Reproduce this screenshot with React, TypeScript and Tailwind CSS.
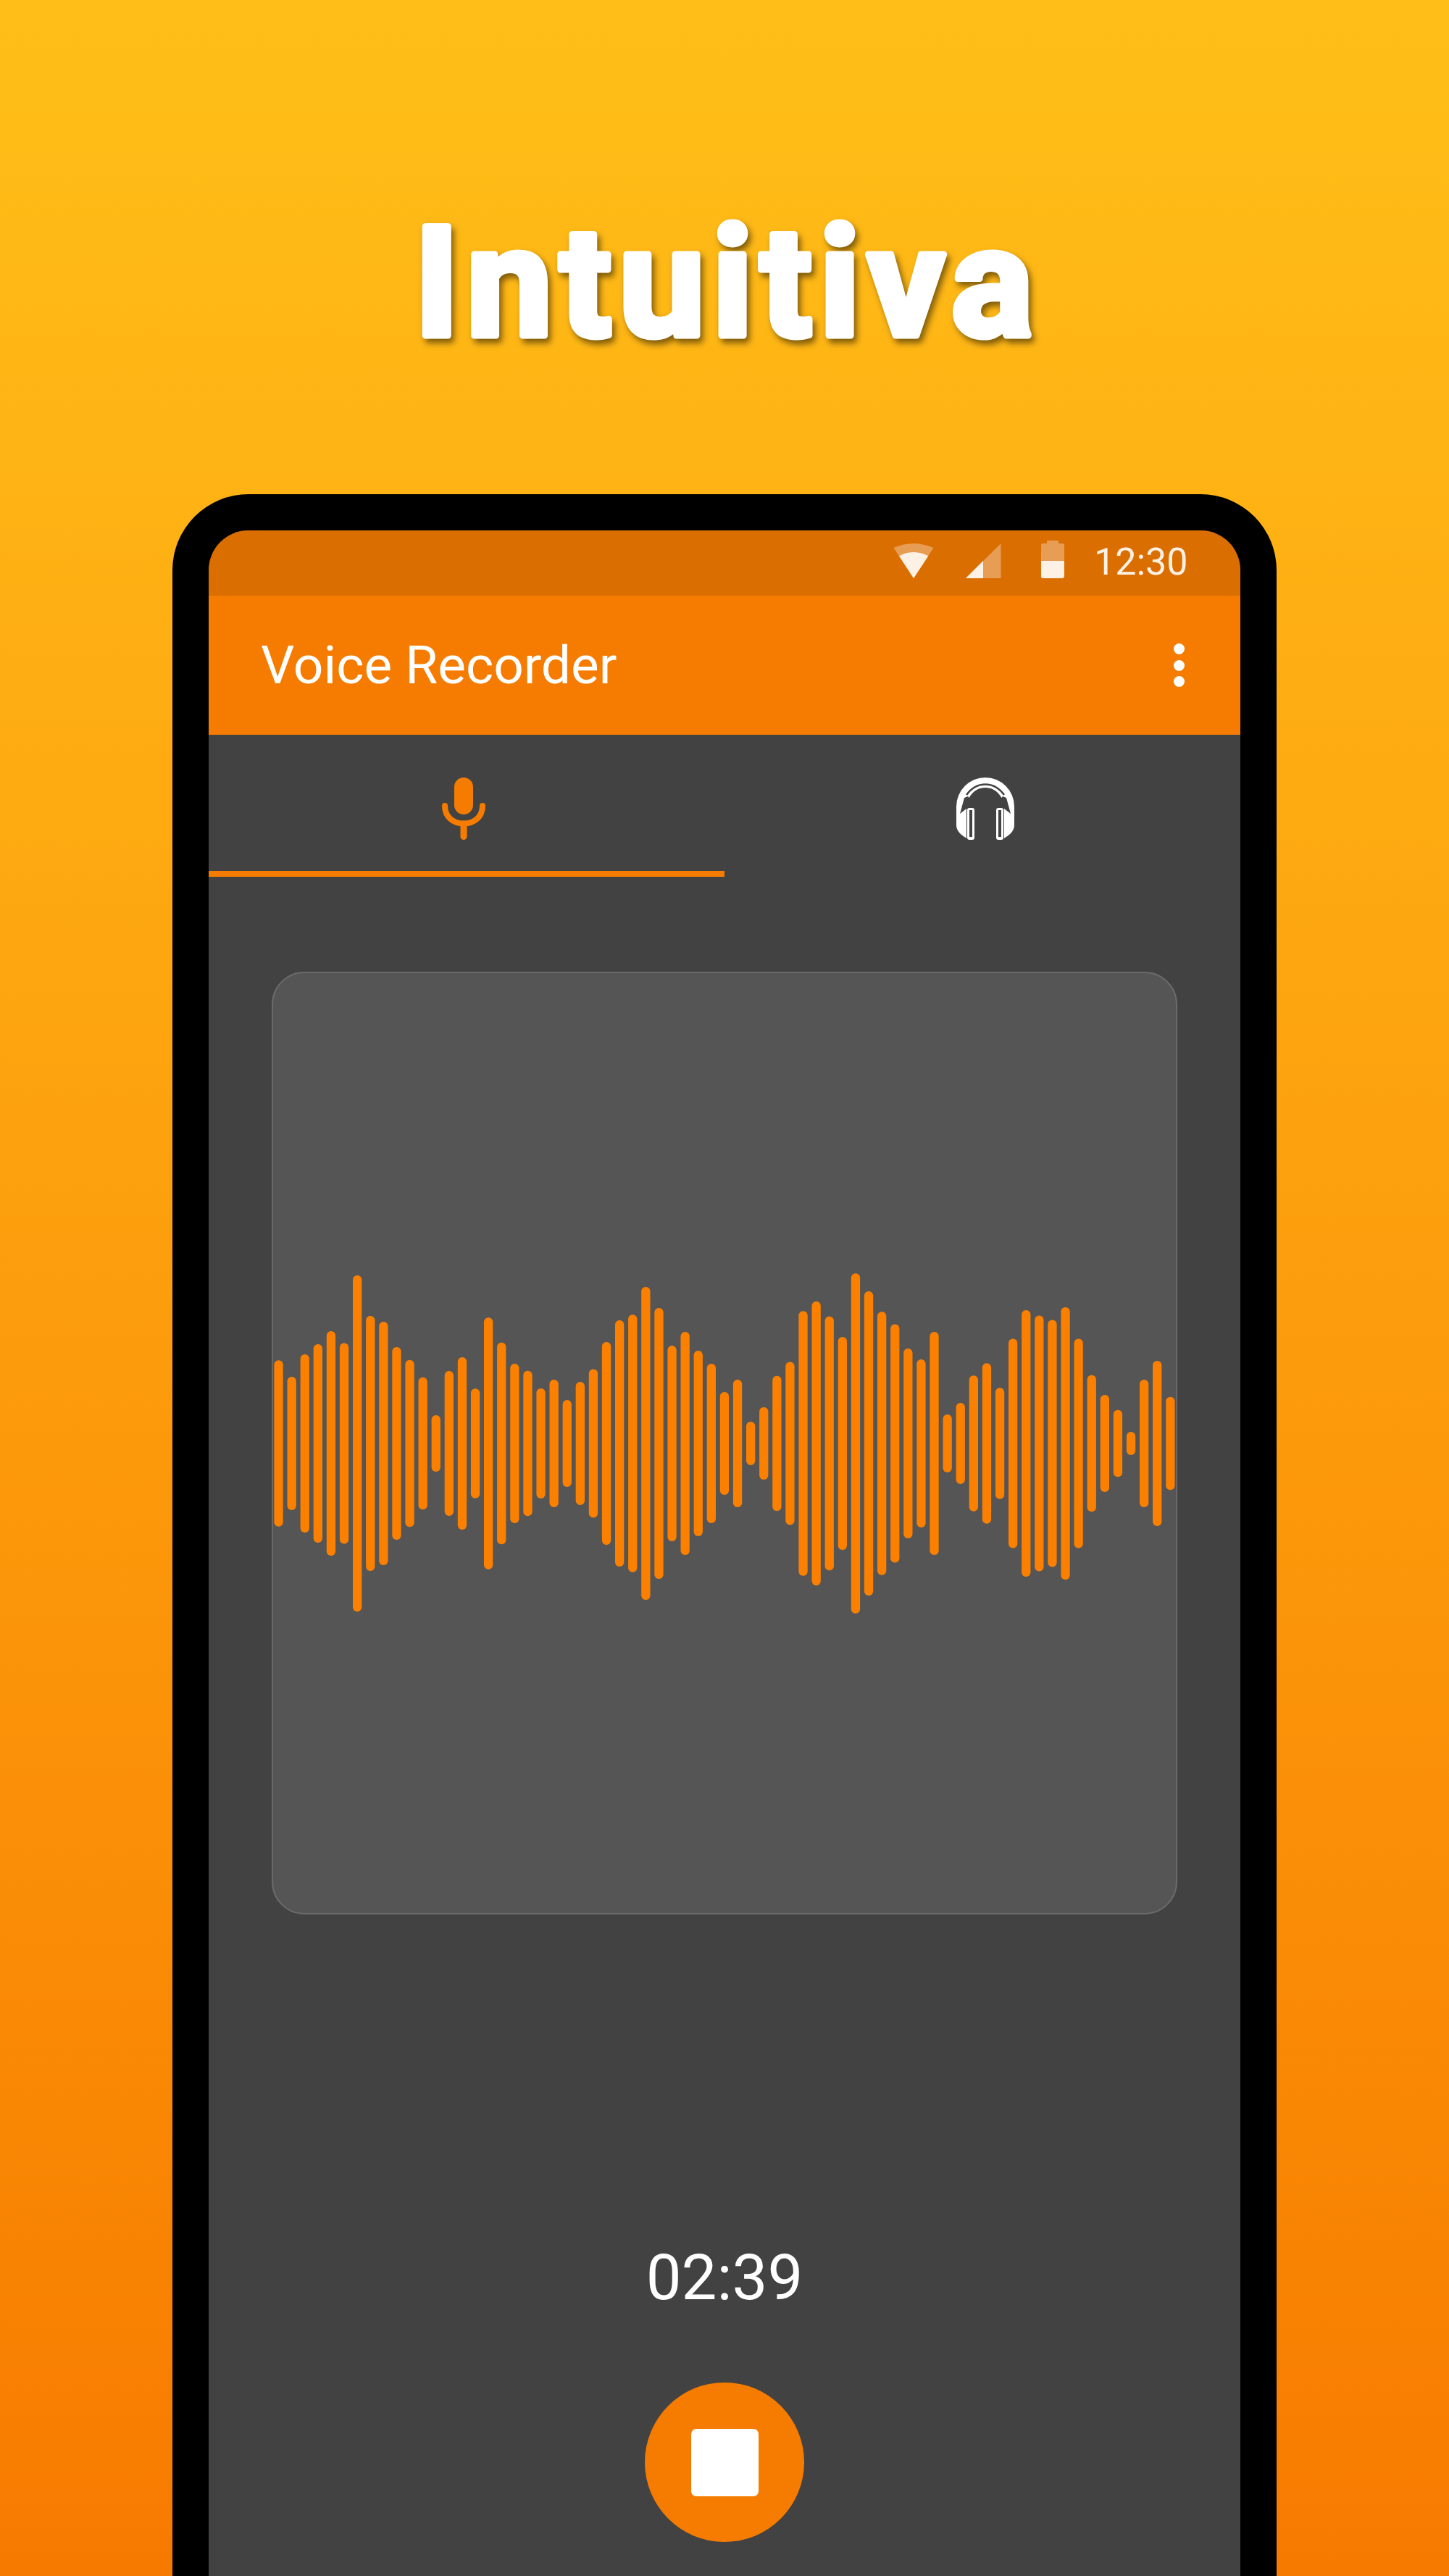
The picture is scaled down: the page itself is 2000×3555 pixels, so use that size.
const bars = [
  688, 552, 738, 822, 930, 831, 1392, 1056, 1008, 798, 692, 547, 234, 600, 714, 454, 1042, 835, 660, 601, 456, 528, 360, 510, 615,
  840, 1020, 1066, 1296, 1122, 810, 924, 768, 660, 426, 528, 180, 300, 559, 675, 1096, 1176, 1052, 882, 1409, 1260, 1090, 987, 786,
  696, 924, 240, 336, 563, 664, 460, 867, 1104, 1059, 1023, 1128, 867, 566, 402, 277, 96, 528, 684, 386,
];

function Wifi() {
  return (
    <svg width="56" height="48" viewBox="0 0 56 48" className="block">
      <path d="M0.4 6Q28 -6 55.5 6L28 48Z" fill="#fff" fillOpacity="0.33" />
      <path d="M8 17.3Q28 6.7 48.3 17.3L28 48Z" fill="#fdf1e5" />
    </svg>
  );
}

function Signal() {
  return (
    <svg width="49" height="48" viewBox="0 0 49 48" className="block">
      <path d="M0 48L48.5 0V48Z" fill="#fff" fillOpacity="0.33" />
      <path d="M0 48L24 24V48Z" fill="#fdf1e5" />
    </svg>
  );
}

function Battery() {
  return (
    <svg width="32" height="52" viewBox="0 0 32 52" className="block">
      <path d="M8 0H24V4H30Q32 4 32 6V28H0V6Q0 4 2 4H8Z" fill="#fff" fillOpacity="0.33" />
      <path d="M0 28H32V49Q32 52 29 52H3Q0 52 0 49Z" fill="#fdf1e5" />
    </svg>
  );
}

function Mic() {
  return (
    <svg width="60" height="86" viewBox="0 0 60 86" className="block" fill="none">
      <rect x="17" y="0" width="26" height="51" rx="13" fill="#f57c00" />
      <path d="M4 39C4 54 15 63.500 30 63.500C45 63.500 56 54 56 39" stroke="#f57c00" strokeWidth="8" strokeLinecap="round" />
      <path d="M30 64V81.500" stroke="#f57c00" strokeWidth="9" strokeLinecap="round" />
    </svg>
  );
}

function Headphones() {
  return (
    <svg width="80" height="86" viewBox="0 0 80 86" className="block">
      <path d="M0 66V40A40 40 0 0 1 80 40V66C80 74 72 81 65 84H15C8 81 0 74 0 66Z" fill="#fff" />
      <path
        d="M5 50L11 28L16 26L17.500 28C24 17 32 14 40 14C48 14 56 17 62.500 28L64 26L69 28L75 50L66 43V86H14V43Z"
        fill="#424242"
      />
      <path d="M14 24C22 13 31 9.500 40 9.500C49 9.500 58 13 66 24" fill="none" stroke="#424242" strokeWidth="2.500" />
      <rect x="15" y="42" width="10" height="44" rx="3" fill="#fff" />
      <rect x="55" y="42" width="10" height="44" rx="3" fill="#fff" />
      <rect x="18" y="45" width="4" height="37" fill="#424242" />
      <rect x="58" y="45" width="4" height="37" fill="#424242" />
    </svg>
  );
}

function Waveform() {
  return (
    <svg width="1246" height="480" viewBox="0 0 1246 480" className="block">
      {bars.map((h, i) => {
        const height = h / 3;
        return (
          <rect key={i} x={1.4 + i * 18.1} y={240 - height / 2} width="12.3" height={height} rx="6" fill="#fb8000" />
        );
      })}
    </svg>
  );
}

export default function App() {
  return (
    <div className="w-[2000px] h-[3555px] overflow-hidden flex flex-col items-center bg-linear-to-b from-[#ffbf18] to-[#f77a00] font-['Roboto',sans-serif]">
      <div className="h-[682px] w-full flex justify-center pt-[220px]">
        <svg width="1200" height="340" viewBox="0 0 1200 340" className="block drop-shadow-[4px_6px_4px_rgba(0,0,0,0.5)]">
          <text
            x="604"
            y="243"
            textAnchor="middle"
            fill="#fff"
            stroke="#fff"
            strokeWidth="9"
            strokeLinejoin="round"
            className="font-['Roboto',sans-serif] font-bold text-[212px] tracking-[10px]"
          >
            Intuitiva
          </text>
        </svg>
      </div>

      <div className="w-[1524px] flex-1 border-x-[50px] border-t-[50px] border-black rounded-t-[105px] bg-[#424242] overflow-hidden">
        <div className="h-[90px] bg-[#db6e00] flex items-end justify-end pb-[24px] pr-[76px]">
          <Wifi />
          <div className="ml-[44px]">
            <Signal />
          </div>
          <div className="ml-[55px]">
            <Battery />
          </div>
          <span className="ml-[41px] w-[126px] text-[52px] leading-[52px] font-normal text-[#fdf1e5] h-[48px]">12:30</span>
        </div>

        <div className="h-[192px] bg-[#f57c00] flex items-center justify-between pl-[72px] pr-[77px]">
          <span className="text-[73px] leading-none text-white">Voice Recorder</span>
          <div className="flex flex-col gap-[7.500px]">
            <div className="w-[15px] h-[15px] rounded-full bg-white" />
            <div className="w-[15px] h-[15px] rounded-full bg-white" />
            <div className="w-[15px] h-[15px] rounded-full bg-white" />
          </div>
        </div>

        <div className="h-[196px] flex">
          <div className="w-1/2 border-b-[8px] border-[#f57c00] flex justify-center pt-[59px] pr-[8px]">
            <Mic />
          </div>
          <div className="w-1/2 flex justify-center pt-[59px] pl-[8px]">
            <Headphones />
          </div>
        </div>

        <div className="ml-[87px] mt-[131px] w-[1250px] h-[1301px] rounded-[45px] border-2 border-[#6a6a6a] bg-[#555555] flex items-center">
          <Waveform />
        </div>

        <div className="mt-[451px] text-center text-[87px] leading-[100px] text-white">02:39</div>

        <div className="mt-[95px] flex justify-center">
          <div className="w-[220px] h-[220px] rounded-full bg-[#f57c00] flex items-center justify-center">
            <div className="w-[93px] h-[93px] rounded-[7px] bg-white" />
          </div>
        </div>
      </div>
    </div>
  );
}
